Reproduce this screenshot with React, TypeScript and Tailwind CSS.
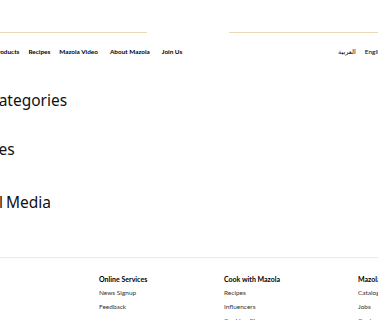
const navItems = ['Products', 'Recipes', 'Mazola Video', 'About Mazola', 'Join Us']

const footerCols = [
  { title: 'Online Services', links: ['News Signup', 'Feedback'], w: 'w-[125px]' },
  { title: 'Cook with Mazola', links: ['Recipes', 'Influencers', 'Cooking Class'], w: 'w-[134px]' },
  { title: 'Mazola Company', links: ['Catalogue', 'Jobs', 'Contact Us'], w: 'w-[134px]' },
]

export default function App() {
  return (
    <div className="relative h-[320px] w-[378px] overflow-hidden bg-white text-black [font-family:Lato,'Open_Sans',sans-serif]">
      <header>
        <div className="flex h-[33px] items-end">
          <div className="w-[147px] border-t border-[#ead9b4]" />
          <div className="ml-[82px] flex-1 border-t border-[#ead9b4]" />
        </div>
        <nav className="flex h-[38px] items-center justify-between">
          <ul className="-ml-[6px] flex items-center gap-[9px] text-[6.4px] font-bold">
            <li>{navItems[0]}</li>
            <li>{navItems[1]}</li>
            <li className="mr-[3px]">{navItems[2]}</li>
            <li className="mr-[3px]">{navItems[3]}</li>
            <li>{navItems[4]}</li>
          </ul>
          <div className="-mr-[7px] flex items-center gap-[9px] text-[6.5px]">
            <span className="[font-family:'Noto_Sans','DejaVu_Sans',sans-serif]">العربية</span>
            <span>English</span>
          </div>
        </nav>
      </header>

      <main className="-ml-[77px] w-[154px] text-center text-[15.5px] leading-[22px] font-normal text-[#111] [font-family:'Noto_Sans',sans-serif]">
        <h2 className="mt-[18px] pr-[5px]">Product Categories</h2>
        <h2 className="mt-[27px] pr-[26px]">Recipes</h2>
        <h2 className="mt-[31px] pl-[12px] [word-spacing:-1px]">Social Media</h2>
      </main>

      <footer className="absolute top-[257px] left-0 w-full border-t border-[#ebebeb]">
        <div className="ml-[99px] flex pt-[16px]">
          {footerCols.map((col) => (
            <div key={col.title} className={`${col.w} shrink-0`}>
              <h3 className="text-[7px] leading-[10px] font-bold">{col.title}</h3>
              <ul className="mt-[4px] text-[6.5px] text-[#333]">
                {col.links.map((l) => (
                  <li key={l} className="h-[14px] leading-[10px]">
                    {l}
                  </li>
                ))}
              </ul>
            </div>
          ))}
        </div>
      </footer>
    </div>
  )
}
